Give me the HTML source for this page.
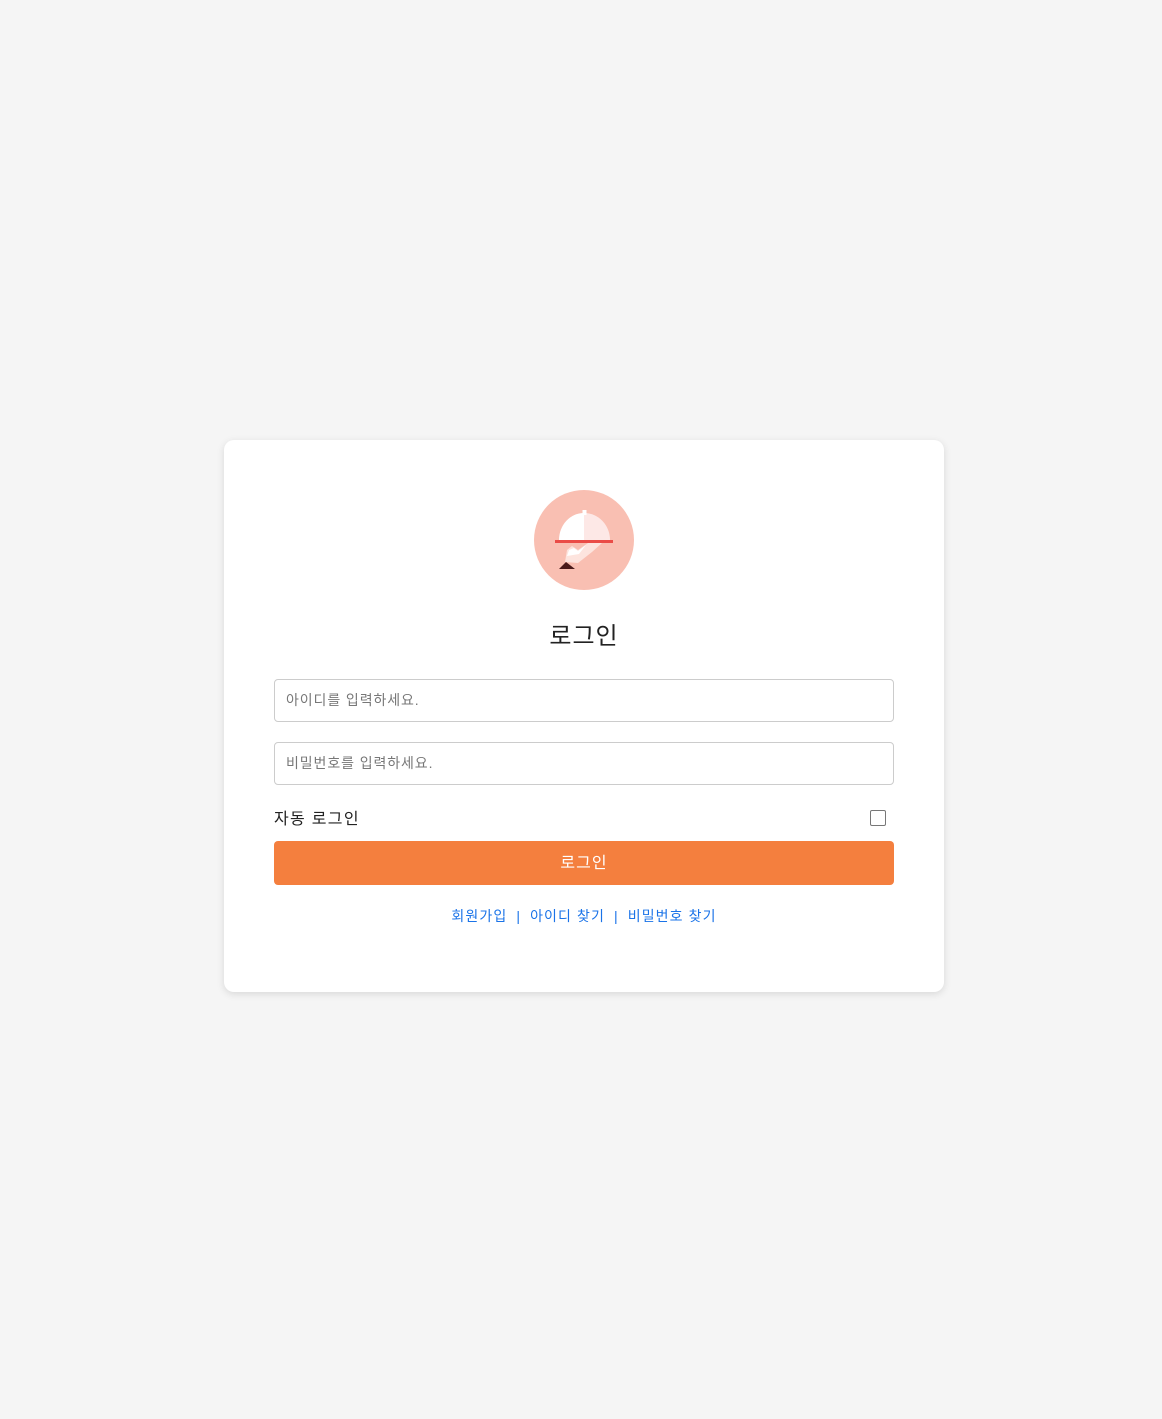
<!DOCTYPE html>
<html><head><meta charset="utf-8"><style>
*{box-sizing:border-box;margin:0;padding:0}
body{width:1162px;height:1419px;background:#f5f5f5;font-family:"Liberation Sans","Noto Sans CJK KR",sans-serif;position:relative}
.card{position:absolute;left:224px;top:440px;width:720px;height:552px;background:#fff;border-radius:10px;box-shadow:0 2px 8px rgba(0,0,0,0.12)}
.logo{position:absolute;left:310px;top:50px}
h1{position:absolute;left:0;width:720px;top:176px;text-align:center;font-size:24px;font-weight:400;color:#222;letter-spacing:1px}
.inp{position:absolute;left:50px;width:620px;height:43px;border:1px solid #ccc;border-radius:4px;font-size:14px;color:#777;padding-left:11px;line-height:41px;letter-spacing:0.9px}
.auto{position:absolute;left:50px;top:365px;font-size:16px;color:#222;letter-spacing:1.3px}
.cb{position:absolute;left:646px;top:370px;width:16px;height:16px;border:1px solid #777;border-radius:2px}
.btn{position:absolute;left:50px;top:401px;width:620px;height:44px;background:#f47f3e;border-radius:4px;color:#fff;text-align:center;line-height:46px;font-size:16px;letter-spacing:1px}
.links{position:absolute;left:0;width:720px;top:466px;text-align:center;font-size:14px;color:#1a73e8;letter-spacing:1.1px}
.links span{margin:0 9px}
</style></head><body>
<div class="card">
<svg class="logo" width="100" height="100" viewBox="0 0 100 100">
<circle cx="50" cy="50" r="50" fill="#f9bfb2"/>
<path d="M31 72 L33 60 L38 56 L44 60 L54 53 L68 53 L58 62 L44 73 Z" fill="#fde4de"/>
<path d="M33 66 L35 60 L40 58 L44 61 L52 55 L45 64 Z" fill="#fff"/>
<path d="M25 79 L32 72 L41 79 Z" fill="#4a1a1a"/>
<path d="M25 50 A25 27 0 0 1 50 23 L50 50 Z" fill="#fff"/>
<path d="M50 23 A26 27 0 0 1 76 50 L50 50 Z" fill="#fde8e6"/>
<rect x="48.5" y="20" width="4" height="5" fill="#fff"/>
<rect x="21" y="50" width="58" height="3" fill="#ea4c47"/>
</svg>
<h1>로그인</h1>
<div class="inp" style="top:239px">아이디를 입력하세요.</div>
<div class="inp" style="top:302px">비밀번호를 입력하세요.</div>
<div class="auto">자동 로그인</div>
<div class="cb"></div>
<div class="btn">로그인</div>
<div class="links">회원가입<span>|</span>아이디 찾기<span>|</span>비밀번호 찾기</div>
</div>
</body></html>
